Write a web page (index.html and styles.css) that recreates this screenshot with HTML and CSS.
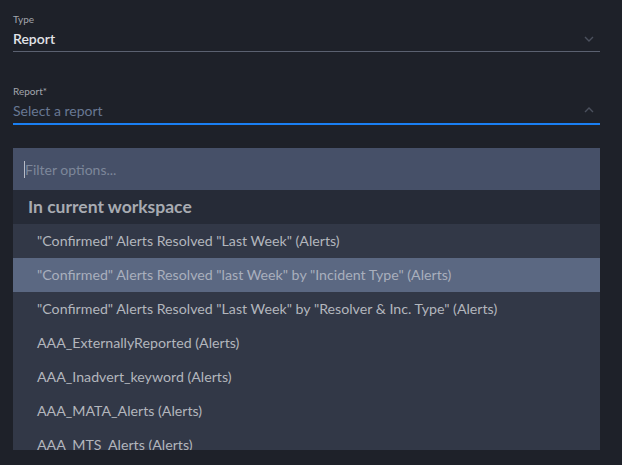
FILE: index.html
```html
<!DOCTYPE html>
<html>
<head>
<meta charset="utf-8">
<link rel="stylesheet" href="styles.css">
</head>
<body>
<div class="page">
  <div class="field">
    <div class="label">Type</div>
    <div class="control">
      <span class="value">Report</span>
      <svg class="chev" width="10" height="6" viewBox="0 0 10 6"><path d="M1 1 L5 5 L9 1" fill="none" stroke="#4b505d" stroke-width="1.4"/></svg>
    </div>
  </div>
  <div class="field field2">
    <div class="label">Report*</div>
    <div class="control active">
      <span class="placeholder">Select a report</span>
      <svg class="chev" width="10" height="6" viewBox="0 0 10 6"><path d="M1 5 L5 1 L9 5" fill="none" stroke="#4b505d" stroke-width="1.4"/></svg>
    </div>
  </div>
  <div class="menu">
    <div class="filter"><span class="caret"></span><span class="filter-ph">Filter options...</span></div>
    <div class="group">In current workspace</div>
    <div class="item">"Confirmed" Alerts Resolved "Last Week" (Alerts)</div>
    <div class="item hl">"Confirmed" Alerts Resolved "last Week" by "Incident Type" (Alerts)</div>
    <div class="item">"Confirmed" Alerts Resolved "Last Week" by "Resolver &amp; Inc. Type" (Alerts)</div>
    <div class="item">AAA_ExternallyReported (Alerts)</div>
    <div class="item">AAA_Inadvert_keyword (Alerts)</div>
    <div class="item">AAA_MATA_Alerts (Alerts)</div>
    <div class="item">AAA_MTS_Alerts (Alerts)</div>
  </div>
</div>
</body>
</html>
```
FILE: styles.css
```css
html, body {
  margin: 0;
  padding: 0;
  background: #1e2129;
  height: 100%;
  overflow: hidden;
}
.page {
  padding: 13px 22px 0 13px;
  font-family: "Lato", "Noto Sans", sans-serif;
}
.field {
  display: flex;
  flex-direction: column;
}
.label {
  font-size: 10px;
  line-height: 12px;
  color: #a3a6ad;
}
.control {
  display: flex;
  align-items: center;
  justify-content: space-between;
  box-sizing: border-box;
  height: 27px;
  padding-top: 1px;
  border-bottom: 1px solid #5b6170;
  padding-right: 6px;
}
.value {
  font-size: 14px;
  font-weight: 600;
  color: #e2e4e8;
}
.field2 {
  margin-top: 33px;
}
.control.active {
  height: 28px;
  padding-top: 0;
  border-bottom: 2px solid #1a7ff2;
}
.placeholder {
  font-size: 14px;
  color: #687893;
}
.menu {
  margin-top: 23px;
  height: 302px;
  overflow: hidden;
  background: #323847;
}
.filter {
  height: 42px;
  background: #465068;
  display: flex;
  align-items: center;
  padding-left: 11px;
}
.caret {
  width: 1px;
  height: 17px;
  background: #b8bcc6;
}
.filter-ph {
  font-size: 14px;
  color: #7d879a;
}
.group {
  height: 34px;
  line-height: 34px;
  background: #262b37;
  padding-left: 15px;
  font-size: 17.5px;
  font-weight: 700;
  color: #a8abb2;
}
.item {
  height: 34px;
  line-height: 34px;
  padding-left: 24px;
  font-size: 14.2px;
  color: #b3b6bd;
  white-space: nowrap;
}
.item.hl {
  background: #5b6882;
  color: #a9afbd;
}
```
